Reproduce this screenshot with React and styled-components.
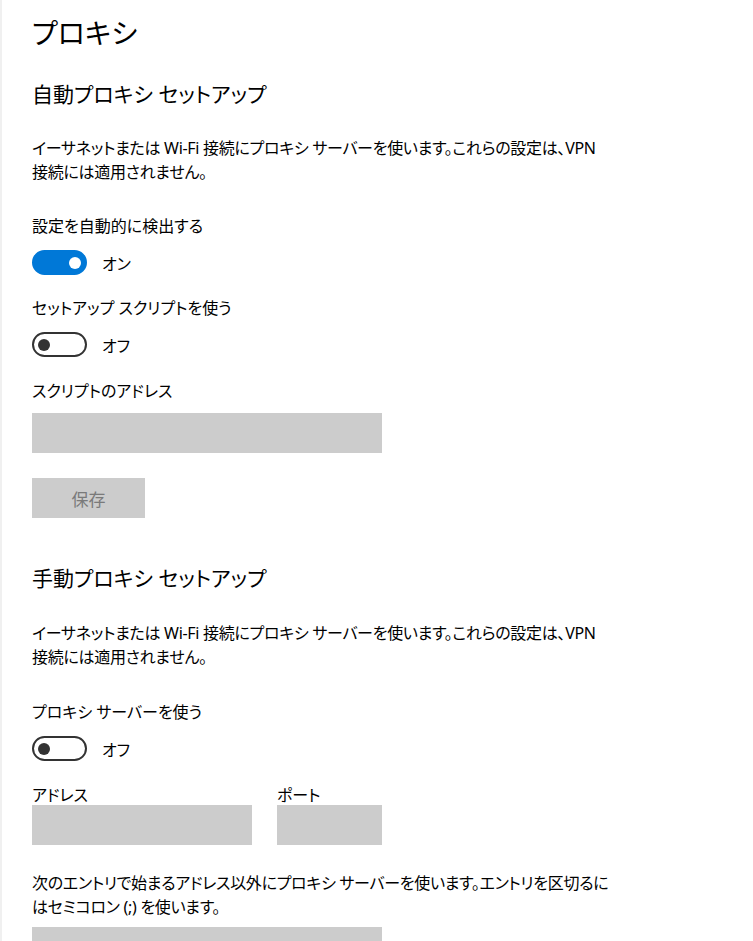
import React from "react";
import styled, { createGlobalStyle } from "styled-components";

const Global = createGlobalStyle`
  html, body { margin: 0; padding: 0; background: #fff; }
  body {
    font-family: "Noto Sans", "Noto Sans CJK JP", sans-serif;
    color: #000;
    font-feature-settings: "palt";
  }
`;

const Page = styled.div`
  min-height: 941px;
  box-sizing: border-box;
  border-left: 2px solid #f0f0f0;
  padding: 13px 0 0 30px;
  overflow: hidden;
`;

const Title = styled.h1`
  margin: 0;
  font-size: 28px;
  line-height: 40px;
  font-weight: 400;
`;

const Heading = styled.h2`
  margin: ${(p) => p.$mt}px 0 0;
  font-size: 21px;
  line-height: 30px;
  font-weight: 400;
`;

const Para = styled.p`
  margin: ${(p) => p.$mt}px 0 0;
  font-size: 16px;
  line-height: 24px;
  letter-spacing: -0.3px;
  max-width: 640px;
`;

const Label = styled.div`
  margin-top: ${(p) => p.$mt}px;
  font-size: 16px;
  line-height: ${(p) => p.$lh || 22}px;
`;

const ToggleRow = styled.div`
  margin-top: ${(p) => p.$mt}px;
  display: flex;
  align-items: center;
  gap: 15px;
  height: 25px;
  font-size: 16px;
`;

const Track = styled.div`
  box-sizing: border-box;
  width: 55px;
  height: 25px;
  border-radius: 13px;
  display: flex;
  align-items: center;
  padding: 0 4px;
  justify-content: ${(p) => (p.$on ? "flex-end" : "flex-start")};
  background: ${(p) => (p.$on ? "#0078d7" : "#fff")};
  border: 2px solid ${(p) => (p.$on ? "#0078d7" : "#333")};
`;

const Knob = styled.div`
  width: 12px;
  height: 12px;
  border-radius: 50%;
  background: ${(p) => (p.$on ? "#fff" : "#333")};
`;

const Input = styled.div`
  margin-top: ${(p) => p.$mt || 0}px;
  width: ${(p) => p.$w}px;
  height: 40px;
  background: #cccccc;
`;

const Button = styled.div`
  margin-top: ${(p) => p.$mt}px;
  width: 113px;
  height: 40px;
  background: #cccccc;
  color: #7a7a7a;
  font-size: 17px;
  display: flex;
  align-items: center;
  justify-content: center;
`;

const FieldRow = styled.div`
  margin-top: ${(p) => p.$mt}px;
  display: flex;
  gap: 25px;
`;

const Field = styled.div`
  display: flex;
  flex-direction: column;
`;

function Toggle({ on, mt }) {
  return (
    <ToggleRow $mt={mt}>
      <Track $on={on}>
        <Knob $on={on} />
      </Track>
      <span>{on ? "オン" : "オフ"}</span>
    </ToggleRow>
  );
}

export default function App() {
  return (
    <>
      <Global />
      <Page>
        <Title>プロキシ</Title>
        <Heading $mt={26}>自動プロキシ セットアップ</Heading>
        <Para $mt={27}>
          イーサネットまたは Wi-Fi 接続にプロキシ サーバーを使います。これらの設定は、VPN
          <br />
          接続には適用されません。
        </Para>
        <Label $mt={31}>設定を自動的に検出する</Label>
        <Toggle on mt={13} />
        <Label $mt={22}>セットアップ スクリプトを使う</Label>
        <Toggle mt={13} />
        <Label $mt={23}>スクリプトのアドレス</Label>
        <Input $mt={11} $w={350} />
        <Button $mt={25}>保存</Button>
        <Heading $mt={45}>手動プロキシ セットアップ</Heading>
        <Para $mt={28}>
          イーサネットまたは Wi-Fi 接続にプロキシ サーバーを使います。これらの設定は、VPN
          <br />
          接続には適用されません。
        </Para>
        <Label $mt={32}>プロキシ サーバーを使う</Label>
        <Toggle mt={13} />
        <FieldRow $mt={24}>
          <Field>
            <Label $mt={0} $lh={20}>アドレス</Label>
            <Input $w={220} />
          </Field>
          <Field>
            <Label $mt={0} $lh={20}>ポート</Label>
            <Input $w={105} />
          </Field>
        </FieldRow>
        <Para $mt={26}>
          次のエントリで始まるアドレス以外にプロキシ サーバーを使います。エントリを区切るに
          <br />
          はセミコロン (;) を使います。
        </Para>
        <Input $mt={8} $w={350} />
      </Page>
    </>
  );
}
